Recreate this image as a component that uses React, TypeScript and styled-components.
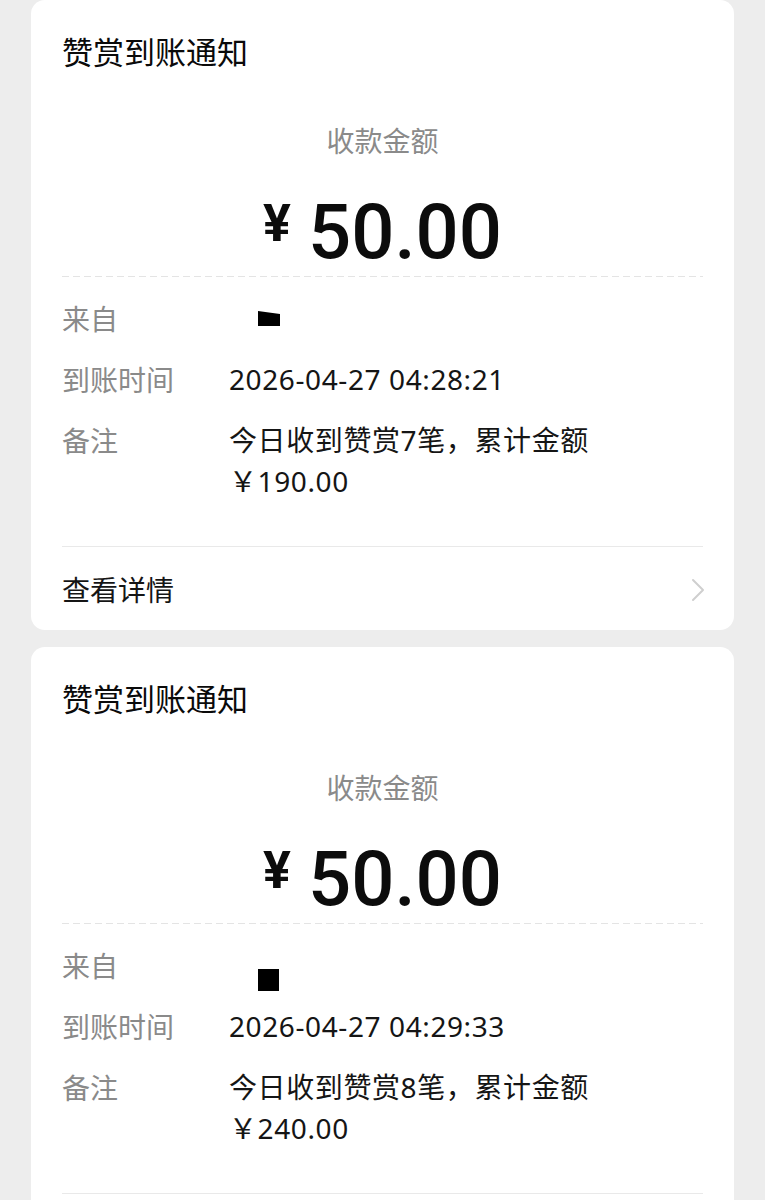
import styled, { createGlobalStyle } from 'styled-components';

const GlobalStyle = createGlobalStyle`
  html, body {
    margin: 0;
    padding: 0;
    background: #ededed;
  }
  body {
    font-family: "Noto Sans", "Noto Sans CJK SC", sans-serif;
    -webkit-font-smoothing: antialiased;
  }
`;

const Page = styled.div`
  display: flex;
  flex-direction: column;
  gap: 17px;
  padding: 0 31px;
  width: 765px;
  box-sizing: border-box;
`;

const Card = styled.div`
  background: #ffffff;
  border-radius: 14px;
  padding: 29px 31px 0;
  display: flex;
  flex-direction: column;
`;

const Title = styled.div`
  font-family: "Noto Sans CJK SC", sans-serif;
  font-size: 31px;
  line-height: 44px;
  font-weight: 400;
  color: #0a0a0a;
`;

const AmountLabel = styled.div`
  margin-top: 47px;
  text-align: center;
  font-family: "Noto Sans CJK SC", sans-serif;
  font-size: 28px;
  line-height: 40px;
  color: #8a8a8a;
`;

const AmountRow = styled.div`
  margin-top: 28px;
  height: 88px;
  display: flex;
  justify-content: center;
  align-items: flex-start;
  gap: 17px;
  color: #0c0c0c;
  font-family: Roboto, "Liberation Sans", sans-serif;
`;

const Yen = styled.span`
  font-size: 52px;
  line-height: 52px;
  font-weight: 700;
  margin-top: 10px;
`;

const Digits = styled.span`
  font-size: 76px;
  line-height: 88px;
  font-weight: 500;
`;

const Dashed = styled.div`
  height: 1px;
  background-image: repeating-linear-gradient(
    to right,
    #e4e4e4 0,
    #e4e4e4 7px,
    transparent 7px,
    transparent 11px
  );
`;

const Rows = styled.div`
  display: flex;
  flex-direction: column;
  gap: 20px;
  padding: 21px 0 44px;
`;

const Row = styled.div`
  display: grid;
  grid-template-columns: 167px 1fr;
  font-size: 28px;
  line-height: 41px;
`;

const Label = styled.div`
  font-family: "Noto Sans CJK SC", sans-serif;
  color: #8a8a8a;
`;

const Value = styled.div`
  color: #151515;
  min-height: 41px;
  letter-spacing: 0.6px;
`;

const Redaction = styled.div<{ $shape: 'wedge' | 'square' }>`
  margin-left: 29px;
  width: ${({ $shape }) => ($shape === 'square' ? '21px' : '22px')};
  height: ${({ $shape }) => ($shape === 'square' ? '22px' : '15px')};
  margin-top: ${({ $shape }) => ($shape === 'square' ? '24px' : '13px')};
  margin-bottom: ${({ $shape }) => ($shape === 'square' ? '-5px' : '13px')};
  background: #000;
  clip-path: ${({ $shape }) =>
    $shape === 'square' ? 'none' : 'polygon(0 0, 100% 20%, 100% 100%, 0 100%)'};
`;

const Divider = styled.div`
  height: 1px;
  background: #e9e9e9;
`;

const DetailRow = styled.div`
  display: flex;
  align-items: center;
  justify-content: space-between;
  padding: 22px 0 20px;
  font-family: "Noto Sans CJK SC", sans-serif;
  font-size: 28px;
  line-height: 41px;
  color: #151515;
`;

const Chevron = () => (
  <svg width="14" height="24" viewBox="0 0 14 24" fill="none" style={{ marginRight: -2 }}>
    <polyline points="2,2 12,12 2,22" stroke="#cfcfcf" strokeWidth="2" strokeLinecap="round" strokeLinejoin="round" />
  </svg>
);

type Notice = {
  shape: 'wedge' | 'square';
  time: string;
  count: number;
  total: string;
};

const notices: Notice[] = [
  { shape: 'wedge', time: '2026-04-27 04:28:21', count: 7, total: '190.00' },
  { shape: 'square', time: '2026-04-27 04:29:33', count: 8, total: '240.00' },
];

const NoticeCard = ({ notice }: { notice: Notice }) => (
  <Card>
    <Title>赞赏到账通知</Title>
    <AmountLabel>收款金额</AmountLabel>
    <AmountRow>
      <Yen>¥</Yen>
      <Digits>50.00</Digits>
    </AmountRow>
    <Dashed />
    <Rows>
      <Row>
        <Label>来自</Label>
        <Value>
          <Redaction $shape={notice.shape} />
        </Value>
      </Row>
      <Row>
        <Label>到账时间</Label>
        <Value>{notice.time}</Value>
      </Row>
      <Row>
        <Label>备注</Label>
        <Value>
          今日收到赞赏{notice.count}笔，累计金额
          <br />
          ￥{notice.total}
        </Value>
      </Row>
    </Rows>
    <Divider />
    <DetailRow>
      查看详情
      <Chevron />
    </DetailRow>
  </Card>
);

export default function App() {
  return (
    <>
      <GlobalStyle />
      <Page>
        {notices.map((n) => (
          <NoticeCard key={n.time} notice={n} />
        ))}
      </Page>
    </>
  );
}
